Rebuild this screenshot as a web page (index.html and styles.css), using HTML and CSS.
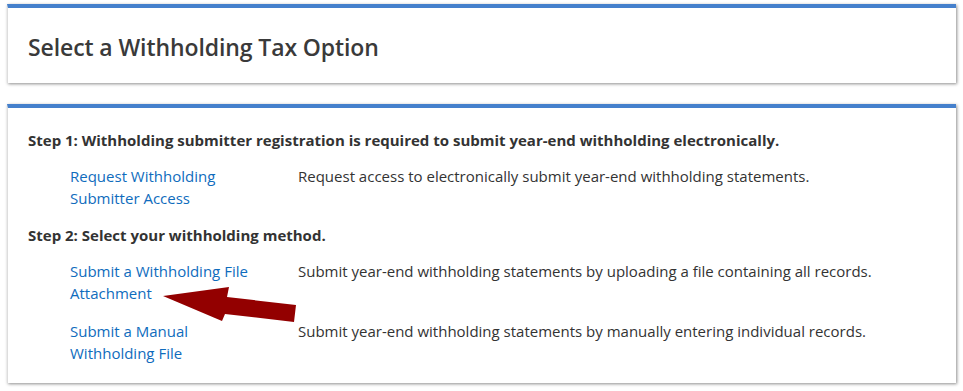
FILE: index.html
```html
<!DOCTYPE html>
<html>
<head>
<meta charset="utf-8">
<link rel="stylesheet" href="styles.css">
</head>
<body>
<div class="page">
  <section class="card title-card">
    <h1 class="title">Select a Withholding Tax Option</h1>
  </section>
  <section class="card body-card">
    <p class="step">Step 1: Withholding submitter registration is required to submit year-end withholding electronically.</p>
    <div class="option">
      <a class="opt-link" href="#">Request Withholding Submitter Access</a>
      <span class="opt-desc">Request access to electronically submit year-end withholding statements.</span>
    </div>
    <p class="step">Step 2: Select your withholding method.</p>
    <div class="option">
      <a class="opt-link" href="#">Submit a Withholding File Attachment</a>
      <span class="opt-desc">Submit year-end withholding statements by uploading a file containing all records.</span>
    </div>
    <div class="option">
      <a class="opt-link" href="#">Submit a Manual Withholding File</a>
      <span class="opt-desc">Submit year-end withholding statements by manually entering individual records.</span>
    </div>
  </section>
</div>
<svg class="arrow" width="963" height="391" viewBox="0 0 963 391">
  <polygon points="163,296 229,287 227,297 296,305 294,322 225,314 222,321" fill="#930000"/>
</svg>
</body>
</html>
```
FILE: styles.css
```css
html, body {
  margin: 0;
  padding: 0;
  background: #fff;
}
body {
  font-family: "Open Sans", "Noto Sans", sans-serif;
  color: #333;
  min-height: 391px;
}
.page {
  padding: 4px 7px 8px 7px;
  width: 949px;
  display: flex;
  flex-direction: column;
  gap: 21px;
}
.card {
  background: #fff;
  border-top: 4px solid #4580cc;
  box-shadow: 1px 1px 3px rgba(0,0,0,0.45);
  border-left: 1px solid #ddd;
}
.title-card {
  display: flex;
  align-items: center;
  padding-left: 20px;
  padding-top: 2px;
  box-sizing: border-box;
  height: 79px;
}
.title {
  margin: 0;
  font-size: 23px;
  font-weight: 600;
  color: #3a3a3a;
  letter-spacing: -0.1px;
}
.body-card {
  height: 279px;
  padding: 22px 20px 0 20px;
  box-sizing: border-box;
}
.step {
  margin: 0 0 15px 0;
  font-size: 15px;
  font-weight: 700;
  color: #333;
  line-height: 20px;
}
.option {
  display: grid;
  grid-template-columns: 228px 1fr;
  padding-left: 42px;
  font-size: 15px;
  line-height: 22px;
  margin-bottom: 16px;
}
.opt-link {
  color: #0f6cbd;
  text-decoration: none;
  width: 200px;
}
.opt-desc {
  color: #333;
}
.arrow {
  position: absolute;
  left: 0;
  top: 0;
  pointer-events: none;
}
```
